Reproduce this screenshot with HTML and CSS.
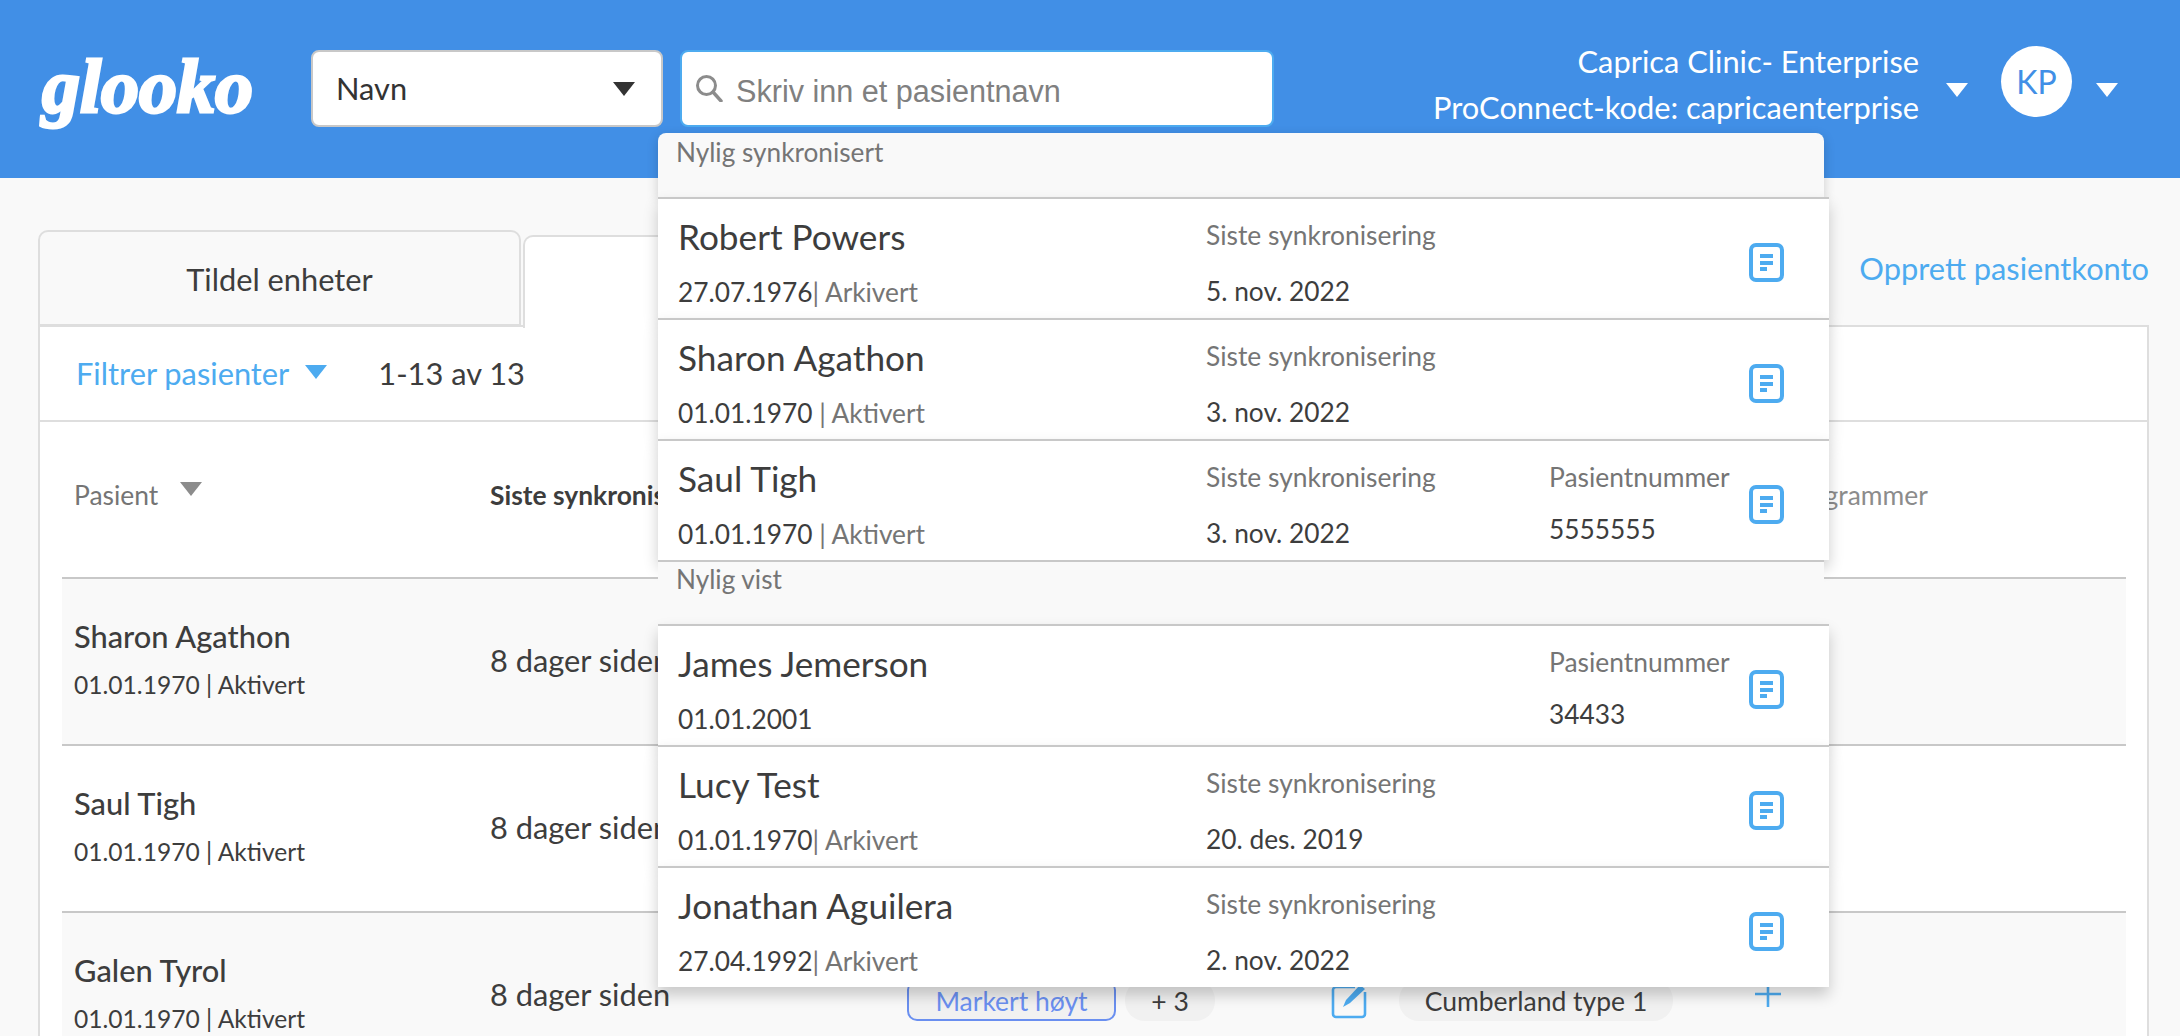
FILE: index.html
```html
<!DOCTYPE html>
<html lang="no">
<head>
<meta charset="utf-8">
<title>Glooko</title>
<link rel="stylesheet" href="styles.css">
</head>
<body>
<header class="topbar">
  <div class="logo">glooko</div>
  <div class="select"><span>Navn</span><i class="caret caret-dark"></i></div>
  <div class="search">
    <svg class="search-icon" width="28" height="28" viewBox="0 0 28 28"><circle cx="11.5" cy="11.5" r="9" fill="none" stroke="#8c8c8c" stroke-width="3"/><path d="M18 18l8 9" stroke="#8c8c8c" stroke-width="3.4" stroke-linecap="round"/></svg>
    <span>Skriv inn et pasientnavn</span>
  </div>
  <div class="clinic">
    <div>Caprica Clinic- Enterprise</div>
    <div>ProConnect-kode: capricaenterprise</div>
  </div>
  <i class="caret caret-white clinic-caret"></i>
  <div class="avatar">KP</div>
  <i class="caret caret-white"></i>
</header>

<main class="main">
  <div class="tabs">
    <div class="tab tab-off">Tildel enheter</div>
    <div class="tab tab-on">Pasienter</div>
    <a class="create">Opprett pasientkonto</a>
  </div>
  <section class="panel">
    <div class="filter">
      <span class="filter-link">Filtrer pasienter</span><i class="caret caret-blue"></i>
      <span class="count">1-13 av 13</span>
    </div>
    <div class="table">
      <div class="grid head">
        <div class="head-patient">Pasient<i class="caret caret-gray"></i></div>
        <div class="head-sync">Siste synkronisering</div>
        <div class="head-plain">Merker</div>
        <div class="head-plain head-prog">Programmer</div>
      </div>
      <div class="grid row shaded">
        <div><div class="pname">Sharon Agathon</div><div class="psub">01.01.1970 | Aktivert</div></div>
        <div class="ago">8 dager siden</div>
        <div class="tags"></div>
        <div class="actions"></div>
      </div>
      <div class="grid row">
        <div><div class="pname">Saul Tigh</div><div class="psub">01.01.1970 | Aktivert</div></div>
        <div class="ago">8 dager siden</div>
        <div class="tags"></div>
        <div class="actions"></div>
      </div>
      <div class="grid row shaded">
        <div><div class="pname">Galen Tyrol</div><div class="psub">01.01.1970 | Aktivert</div></div>
        <div class="ago">8 dager siden</div>
        <div class="tags"><span class="flag">Markert høyt</span><span class="more">+ 3</span></div>
        <div class="actions">
          <svg class="edit" width="36" height="36" viewBox="0 0 36 36"><path d="M24 4H5a3 3 0 0 0-3 3v24a3 3 0 0 0 3 3h26a3 3 0 0 0 3-3V9" fill="none" stroke="#4dabf0" stroke-width="2.6"/><path d="M12 24l3-7L29 2l5 4-15 14z" fill="#4dabf0"/></svg>
          <span class="program">Cumberland type 1</span>
          <svg class="plus" width="26" height="26" viewBox="0 0 26 26"><path d="M13 0v26M0 13h26" stroke="#4dabf0" stroke-width="2.6"/></svg>
        </div>
      </div>
    </div>
  </section>
</main>

<aside class="results">
  <div class="section">Nylig synkronisert</div>
  <div class="result">
    <div><div class="rname">Robert Powers</div><div class="rdate">27.07.1976<span class="rstate">| Arkivert</span></div></div>
    <div><div class="rlabel">Siste synkronisering</div><div class="rdate">5. nov. 2022</div></div>
    <div></div>
    <svg class="doc" width="35" height="39" viewBox="0 0 35 39"><rect x="2" y="2" width="31" height="35" rx="5" fill="none" stroke="#4dabf0" stroke-width="4"/><path d="M11 11h13v4H11zM11 18h13v4H11zM11 24h7v4h-7z" fill="#4dabf0"/></svg>
  </div>
  <div class="result">
    <div><div class="rname">Sharon Agathon</div><div class="rdate">01.01.1970<span class="rstate"> | Aktivert</span></div></div>
    <div><div class="rlabel">Siste synkronisering</div><div class="rdate">3. nov. 2022</div></div>
    <div></div>
    <svg class="doc" width="35" height="39" viewBox="0 0 35 39"><rect x="2" y="2" width="31" height="35" rx="5" fill="none" stroke="#4dabf0" stroke-width="4"/><path d="M11 11h13v4H11zM11 18h13v4H11zM11 24h7v4h-7z" fill="#4dabf0"/></svg>
  </div>
  <div class="result">
    <div><div class="rname">Saul Tigh</div><div class="rdate">01.01.1970<span class="rstate"> | Aktivert</span></div></div>
    <div><div class="rlabel">Siste synkronisering</div><div class="rdate">3. nov. 2022</div></div>
    <div><div class="rlabel">Pasientnummer</div><div class="rdate rnum">5555555</div></div>
    <svg class="doc" width="35" height="39" viewBox="0 0 35 39"><rect x="2" y="2" width="31" height="35" rx="5" fill="none" stroke="#4dabf0" stroke-width="4"/><path d="M11 11h13v4H11zM11 18h13v4H11zM11 24h7v4h-7z" fill="#4dabf0"/></svg>
  </div>
  <div class="section">Nylig vist</div>
  <div class="result">
    <div><div class="rname">James Jemerson</div><div class="rdate">01.01.2001</div></div>
    <div></div>
    <div><div class="rlabel">Pasientnummer</div><div class="rdate rnum">34433</div></div>
    <svg class="doc" width="35" height="39" viewBox="0 0 35 39"><rect x="2" y="2" width="31" height="35" rx="5" fill="none" stroke="#4dabf0" stroke-width="4"/><path d="M11 11h13v4H11zM11 18h13v4H11zM11 24h7v4h-7z" fill="#4dabf0"/></svg>
  </div>
  <div class="result">
    <div><div class="rname">Lucy Test</div><div class="rdate">01.01.1970<span class="rstate">| Arkivert</span></div></div>
    <div><div class="rlabel">Siste synkronisering</div><div class="rdate">20. des. 2019</div></div>
    <div></div>
    <svg class="doc" width="35" height="39" viewBox="0 0 35 39"><rect x="2" y="2" width="31" height="35" rx="5" fill="none" stroke="#4dabf0" stroke-width="4"/><path d="M11 11h13v4H11zM11 18h13v4H11zM11 24h7v4h-7z" fill="#4dabf0"/></svg>
  </div>
  <div class="result">
    <div><div class="rname">Jonathan Aguilera</div><div class="rdate">27.04.1992<span class="rstate">| Arkivert</span></div></div>
    <div><div class="rlabel">Siste synkronisering</div><div class="rdate">2. nov. 2022</div></div>
    <div></div>
    <svg class="doc" width="35" height="39" viewBox="0 0 35 39"><rect x="2" y="2" width="31" height="35" rx="5" fill="none" stroke="#4dabf0" stroke-width="4"/><path d="M11 11h13v4H11zM11 18h13v4H11zM11 24h7v4h-7z" fill="#4dabf0"/></svg>
  </div>
</aside>
</body>
</html>
```
FILE: styles.css
```css
* { box-sizing: border-box; }
html, body { margin: 0; height: 1036px; overflow: hidden; }
body { position: relative; background: #f9f9f9; font-family: "Lato", sans-serif; color: #3d3d3d; }

.caret { display: inline-block; width: 0; height: 0; border-left: 11px solid transparent; border-right: 11px solid transparent; flex: none; }
.caret-dark { border-top: 14px solid #333; }
.caret-white { border-top: 14px solid #fff; }
.caret-blue { border-top: 14px solid #4dabf0; margin: 0 0 4px 16px; }
.caret-gray { border-top: 14px solid #8c8c8c; margin-left: 22px; position: relative; top: -6px; }

.topbar { height: 178px; background: #418fe6; display: flex; align-items: center; padding: 0 62px 0 42px; }
.logo { width: 269px; flex: none; color: #fff; font: italic bold 76px/1 "Liberation Serif", serif; -webkit-text-stroke: 3px #fff; position: relative; top: -3px; }
.select { width: 352px; height: 77px; margin-top: -1px; flex: none; background: #fff; border: 2px solid #c8c8c8; border-radius: 8px; display: flex; align-items: center; justify-content: space-between; padding: 0 26px 0 23px; font-size: 30.8px; color: #333; }
.search { width: 594px; height: 77px; margin: -1px 0 0 17px; flex: none; background: #fff; border: 2px solid #4dabf0; border-radius: 8px; display: flex; align-items: center; gap: 13px; padding: 0 0 0 13px; font: 30.6px "Liberation Sans", sans-serif; color: #808080; }
.search-icon { flex: none; margin-top: -2px; }
.search span { position: relative; top: 3px; }
.clinic { margin-left: auto; text-align: right; color: #fff; font-size: 30.8px; line-height: 46px; margin-top: -8px; }
.clinic-caret { margin: 2px 33px 0 27px; }
.avatar { width: 71px; height: 71px; border-radius: 50%; background: #fff; color: #418fe6; font-size: 32px; display: flex; align-items: center; justify-content: center; margin-right: 24px; margin-top: -16px; }
.topbar > .caret-white:last-child { margin-top: 2px; }

.main { padding: 52px 31px 0 38px; }
.tabs { height: 96px; display: flex; align-items: flex-end; gap: 2px; }
.tab { border: 2px solid #dedede; border-radius: 10px 10px 0 0; display: flex; align-items: center; justify-content: center; font-size: 30.8px; }
.tab-off { width: 483px; height: 96px; background: #f9f9f9; padding-top: 2px; }
.tab-on { width: 1000px; height: 93px; background: #fff; border-bottom: 0; margin-bottom: -2px; position: relative; }
.create { margin-left: auto; color: #4dabf0; font-size: 30.8px; align-self: center; margin-top: -19px; }

.panel { background: #fff; border: 2px solid #dedede; margin-top: -1px; height: 800px; }
.filter { height: 95px; display: flex; align-items: center; border-bottom: 2px solid #dedede; padding: 0 0 0 36px; }
.filter-link { color: #4dabf0; font-size: 30.8px; }
.count { margin-left: 51px; font-size: 30.8px; }
.table { margin: 0 21px 0 22px; }
.grid { display: grid; grid-template-columns: 416px 417px 424px 1fr; align-items: center; padding-left: 12px; }
.head { height: 155px; padding-bottom: 9px; }
.head-patient { color: #757575; font-size: 26.4px; display: flex; align-items: center; }
.head-sync { font-size: 26.4px; font-weight: 700; white-space: nowrap; }
.head-plain { font-size: 26.4px; color: #8c8c8c; }
.head-prog { padding-left: 454px; white-space: nowrap; }
.row { height: 167px; border-top: 2px solid #c8c8c8; }
.shaded { background: #f9f9f9; }
.pname { font-size: 30.8px; font-weight: 500; line-height: 36px; margin-top: -5px; }
.psub { font-size: 24.6px; line-height: 28px; margin-top: 16px; }
.ago { font-size: 30.8px; margin-top: -3px; }
.tags { display: flex; gap: 9px; align-items: center; margin-top: 10px; }
.flag { width: 209px; height: 41px; border: 2px solid #6a8ff0; border-radius: 10px; background: #f1f1f1; color: #6a8ff0; font-size: 26.5px; display: flex; align-items: center; justify-content: center; }
.more { width: 90px; height: 41px; border-radius: 20px; background: #f1f1f1; font-size: 26.5px; display: flex; align-items: center; justify-content: center; }
.actions { display: flex; align-items: center; margin-top: 10px; }
.edit { flex: none; margin-right: 32px; }
.program { width: 274px; height: 41px; border-radius: 20px; background: #f1f1f1; font-size: 26.5px; display: flex; align-items: center; justify-content: center; flex: none; }
.plus { flex: none; margin-left: 82px; position: relative; top: -7px; }

.results { position: absolute; left: 658px; top: 133px; width: 1171px; }
.section { width: 1166px; height: 64px; background: #f9f9f9; padding: 5px 0 0 18px; font-size: 26.2px; line-height: 28px; color: #757575; border-radius: 8px 8px 0 0; box-shadow: 0 4px 12px rgba(0,0,0,.18); position: relative; }
.section ~ .section { border-radius: 0; height: 64px; border-top: 2px solid #c8c8c8; padding-top: 3px; box-shadow: none; }
.result { height: 121px; background: #fff; border-top: 2px solid #c8c8c8; display: grid; grid-template-columns: 528px 343px 200px 35px; padding-left: 20px; align-items: start; box-shadow: 0 8px 14px rgba(0,0,0,.2); position: relative; }
.rname { font-size: 35.2px; line-height: 40px; margin-top: 17px; }
.rlabel { font-size: 26.4px; line-height: 30px; margin-top: 21px; color: #757575; }
.rdate { font-size: 26.3px; line-height: 30px; margin-top: 26px; }
.rname + .rdate { margin-top: 21px; }
.rnum { margin-top: 22px; }
.rstate { color: #757575; }
.doc { margin-top: 44px; }
```
